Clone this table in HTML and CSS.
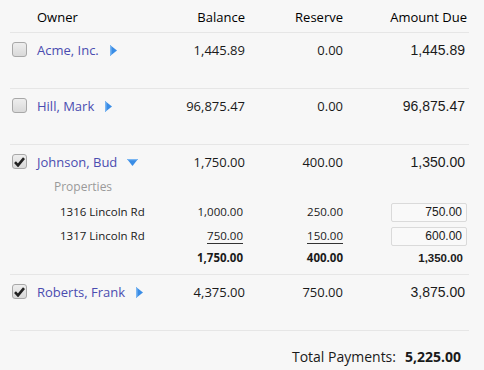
FILE: index.html
```html
<!DOCTYPE html>
<html>
<head>
<meta charset="utf-8">
<link rel="stylesheet" href="styles.css">
</head>
<body>
<div class="table">
  <div class="row head">
    <span></span>
    <span class="owner">Owner</span>
    <span class="num">Balance</span>
    <span class="num">Reserve</span>
    <span class="num">Amount Due</span>
  </div>

  <div class="row item">
    <span class="cb"></span>
    <span class="owner"><a class="link">Acme, Inc.</a><svg class="tri-r" width="7" height="11" viewBox="0 0 7 11"><polygon points="0,0 7,5.5 0,11" fill="#3a8de6"/><polygon points="0,0 1.5,1.2 1.5,9.8 0,11" fill="#7ab6f2"/></svg></span>
    <span class="num">1,445.89</span>
    <span class="num">0.00</span>
    <span class="num due">1,445.89</span>
  </div>

  <div class="row item">
    <span class="cb"></span>
    <span class="owner"><a class="link">Hill, Mark</a><svg class="tri-r" width="7" height="11" viewBox="0 0 7 11"><polygon points="0,0 7,5.5 0,11" fill="#3a8de6"/><polygon points="0,0 1.5,1.2 1.5,9.8 0,11" fill="#7ab6f2"/></svg></span>
    <span class="num">96,875.47</span>
    <span class="num">0.00</span>
    <span class="num due">96,875.47</span>
  </div>

  <div class="row item open">
    <span class="cb checked"><svg width="11" height="10" viewBox="0 0 11 10"><path d="M1 5.2 L4 8.4 L10 1.2" fill="none" stroke="#222" stroke-width="2.6" stroke-linejoin="miter"/></svg></span>
    <span class="owner"><a class="link">Johnson, Bud</a><svg class="tri-d" width="11" height="7" viewBox="0 0 11 7"><polygon points="0,0 11,0 5.5,7" fill="#3a8de6"/><polygon points="0,0 11,0 10,1.3 1,1.3" fill="#7ab6f2"/></svg></span>
    <span class="num">1,750.00</span>
    <span class="num">400.00</span>
    <span class="num due">1,350.00</span>
    <div class="details">
      <div class="props">Properties</div>
      <div class="sub">
        <span class="label">1316 Lincoln Rd</span>
        <span class="num"><span class="v">1,000.00</span></span>
        <span class="num"><span class="v">250.00</span></span>
        <span class="num"><span class="box">750.00</span></span>
      </div>
      <div class="sub">
        <span class="label">1317 Lincoln Rd</span>
        <span class="num"><span class="v ul">750.00</span></span>
        <span class="num"><span class="v ul">150.00</span></span>
        <span class="num"><span class="box">600.00</span></span>
      </div>
      <div class="sub total">
        <span class="label"></span>
        <span class="num">1,750.00</span>
        <span class="num">400.00</span>
        <span class="num sumdue">1,350.00</span>
      </div>
    </div>
  </div>

  <div class="row item">
    <span class="cb checked"><svg width="11" height="10" viewBox="0 0 11 10"><path d="M1 5.2 L4 8.4 L10 1.2" fill="none" stroke="#222" stroke-width="2.6" stroke-linejoin="miter"/></svg></span>
    <span class="owner"><a class="link">Roberts, Frank</a><svg class="tri-r" width="7" height="11" viewBox="0 0 7 11"><polygon points="0,0 7,5.5 0,11" fill="#3a8de6"/><polygon points="0,0 1.5,1.2 1.5,9.8 0,11" fill="#7ab6f2"/></svg></span>
    <span class="num">4,375.00</span>
    <span class="num">750.00</span>
    <span class="num due">3,875.00</span>
  </div>

  <div class="totals">
    <span class="tlabel">Total Payments:</span>
    <span class="tvalue">5,225.00</span>
  </div>
</div>
</body>
</html>
```

FILE: styles.css
```css
html, body {
  margin: 0;
  padding: 0;
  background: #f7f7f7;
}
body {
  font-family: "Open Sans", "Noto Sans", sans-serif;
  font-size: 13px;
  color: #1a1a1a;
}
.table {
  width: 459px;
  margin: 0 0 0 10px;
  padding-top: 8px;
}
.row {
  display: grid;
  grid-template-columns: 25px 130px 78px 98px 124px;
  padding: 0 2px;
  border-bottom: 1px solid #e6e6e6;
  line-height: 18px;
}
.head {
  padding-bottom: 6px;
  color: #000;
}
.item {
  padding-top: 8px;
  padding-bottom: 29px;
}
.item.open {
  padding-bottom: 6px;
}
.num {
  text-align: right;
}
.owner {
  display: flex;
  align-items: center;
  white-space: nowrap;
}
.link {
  color: #4a4cb0;
}
.tri-r {
  margin-left: 11px;
}
.tri-d {
  margin-left: 10px;
}
.due {
  font-family: "Liberation Sans", Arial, sans-serif;
  font-size: 14px;
  padding-right: 2px;
}
.cb {
  width: 13px;
  height: 13px;
  margin: 1px 0 0 0;
  border: 1px solid #a8a8a8;
  border-radius: 3px;
  background: linear-gradient(#eeeeee, #d9d9d9);
  display: flex;
  align-items: center;
  justify-content: center;
}
.details {
  grid-column: 1 / 6;
  margin-top: 7px;
}
.props {
  padding-left: 42px;
  color: #9a9a9a;
  font-size: 12px;
  line-height: 18px;
  margin-bottom: 4px;
}
.sub {
  display: grid;
  grid-template-columns: 155px 76px 100px 124px;
  height: 24px;
  align-items: center;
  font-size: 11.5px;
}
.sub.total {
  height: 20px;
  font-weight: bold;
}
.label {
  padding-left: 48px;
}
.v {
  display: inline-block;
  line-height: 14px;
}
.ul {
  border-bottom: 1px solid #333;
}
.box {
  display: inline-block;
  box-sizing: border-box;
  width: 76px;
  height: 19px;
  line-height: 17px;
  padding-right: 4px;
  border: 1px solid #dadada;
  border-radius: 2px;
  background: #f9f9f9;
  font-family: "Liberation Sans", Arial, sans-serif;
  font-size: 12px;
  text-align: right;
  vertical-align: middle;
}
.sumdue {
  font-family: "Liberation Sans", Arial, sans-serif;
  padding-right: 4px;
}
.totals {
  margin-top: 16px;
  line-height: 20px;
  font-size: 14px;
  display: flex;
  justify-content: flex-end;
  gap: 9px;
  padding-right: 8px;
}
.tvalue {
  font-weight: bold;
}
```
